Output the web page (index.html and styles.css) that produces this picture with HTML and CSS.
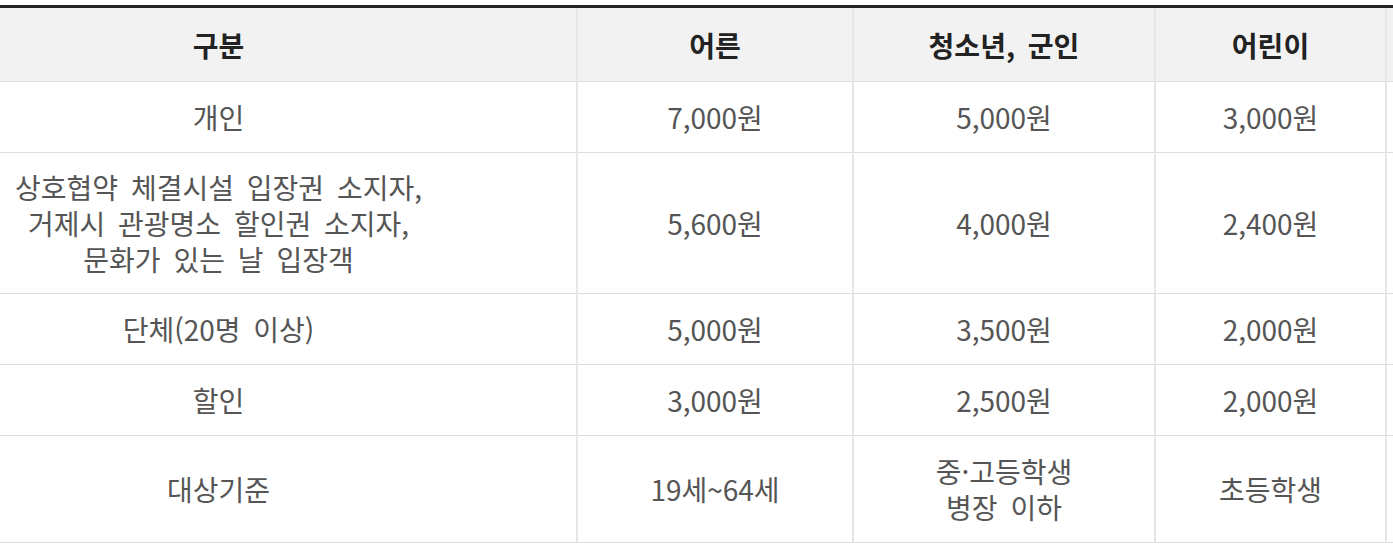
FILE: index.html
```html
<!DOCTYPE html>
<html lang="ko">
<head>
<meta charset="utf-8">
<title>관람료</title>
<link rel="stylesheet" href="styles.css">
</head>
<body>
<table class="fee">
  <colgroup>
    <col class="c1"><col class="c2"><col class="c3"><col class="c4"><col class="c5">
  </colgroup>
  <thead>
    <tr><th>구분</th><th>어른</th><th>청소년, 군인</th><th>어린이</th><th></th></tr>
  </thead>
  <tbody>
    <tr><td>개인</td><td>7,000원</td><td>5,000원</td><td>3,000원</td><td></td></tr>
    <tr><td>상호협약 체결시설 입장권 소지자,<br>거제시 관광명소 할인권 소지자,<br>문화가 있는 날 입장객</td><td>5,600원</td><td>4,000원</td><td>2,400원</td><td></td></tr>
    <tr><td>단체(20명 이상)</td><td>5,000원</td><td>3,500원</td><td>2,000원</td><td></td></tr>
    <tr><td>할인</td><td>3,000원</td><td>2,500원</td><td>2,000원</td><td></td></tr>
    <tr class="last"><td>대상기준</td><td>19세~64세</td><td>중·고등학생<br>병장 이하</td><td>초등학생</td><td></td></tr>
  </tbody>
</table>
</body>
</html>
```
FILE: styles.css
```css
html, body {
  margin: 0;
  padding: 0;
  background: #fff;
  overflow: hidden;
}
body {
  padding-top: 5px;
  font-family: "Noto Sans CJK KR", "Noto Sans", sans-serif;
}
.fee {
  border-collapse: collapse;
  table-layout: fixed;
  width: 1700px;
  margin-left: -139px;
  border-top: 3px solid #222;
}
.c1 { width: 716px; }
.c2 { width: 276px; }
.c3 { width: 302px; }
.c4 { width: 231px; }
.c5 { width: 175px; }
.fee th, .fee td {
  box-sizing: border-box;
  height: 71px;
  padding: 16px 0;
  text-align: center;
  vertical-align: middle;
  font-size: 28px;
  line-height: 36px;
  word-spacing: 5px;
  border-bottom: 1px solid #ddd;
  border-left: 2px solid #e6e6e6;
}
.fee th:first-child, .fee td:first-child {
  border-left: none;
}
.fee th {
  background: #f2f2f2;
  color: #222;
  font-weight: 700;
  height: 75px;
}
.fee td {
  color: #555;
  font-weight: 400;
}
.fee .last td {
  height: 107px;
}
```
